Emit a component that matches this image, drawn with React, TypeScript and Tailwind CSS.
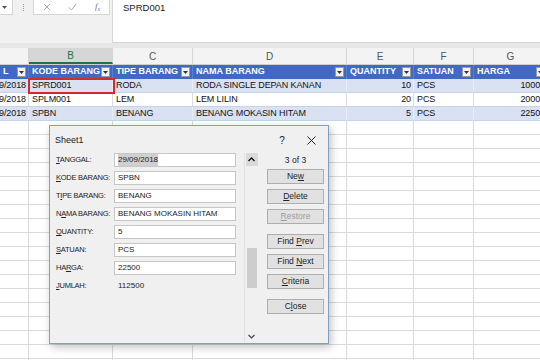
import React from "react";

const font = { fontFamily: '"Liberation Sans", Arial, sans-serif' };

const cols = [29, 84, 80, 154, 67, 60, 74];
const letters = ["", "B", "C", "D", "E", "F", "G"];
const heads = ["L", "KODE BARANG", "TIPE BARANG", "NAMA BARANG", "QUANTITY", "SATUAN", "HARGA"];
const rows = [
  ["9/2018", "SPRD001", "RODA", "RODA SINGLE DEPAN KANAN", "10", "PCS", "10000"],
  ["9/2018", "SPLM001", "LEM", "LEM LILIN", "20", "PCS", "20000"],
  ["9/2018", "SPBN", "BENANG", "BENANG MOKASIN HITAM", "5", "PCS", "22500"],
];
const rightAligned = [true, false, false, false, true, false, true];

function Arrow() {
  return (
    <span className="w-[9px] h-[10px] bg-[#f2f2f2] border border-[#9a9a9a] flex items-center justify-center shrink-0">
      <svg width="5" height="3" viewBox="0 0 5 3">
        <path d="M0 0h5L2.5 3z" fill="#333" />
      </svg>
    </span>
  );
}

// text with one underlined (accelerator) letter
function U({ text, at }: { text: string; at: number }) {
  return (
    <span className="whitespace-pre">
      {text.slice(0, at)}
      <span className="underline">{text[at]}</span>
      {text.slice(at + 1)}
    </span>
  );
}

const fields: [string, number, string, boolean][] = [
  ["TANGGAL:", 0, "29/09/2018", true],
  ["KODE BARANG:", 0, "SPBN", true],
  ["TIPE BARANG:", 1, "BENANG", true],
  ["NAMA BARANG:", 1, "BENANG MOKASIN HITAM", true],
  ["QUANTITY:", 0, "5", true],
  ["SATUAN:", 0, "PCS", true],
  ["HARGA:", 2, "22500", true],
  ["JUMLAH:", 0, "112500", false],
];

function Btn({ text, at, disabled, className = "" }: { text: string; at: number; disabled?: boolean; className?: string }) {
  return (
    <div
      className={`h-[15px] w-[57px] bg-[#e1e1e1] border border-[#adadad] flex items-center justify-center text-[8.5px] ${
        disabled ? "text-[#9d9d9d]" : "text-[#222]"
      } ${className}`}
    >
      <U text={text} at={at} />
    </div>
  );
}

function Dialog() {
  return (
    <div className="absolute left-[49px] top-[125px] w-[280px] h-[219px] bg-[#f0f0f0] border border-[#7f9fc8] shadow-[2px_3px_8px_rgba(0,0,0,0.25)] flex flex-col">
      <div className="h-[27px] flex items-center pl-[5px] pt-[2px] text-[9px] text-[#222] shrink-0">
        <span>Sheet1</span>
        <span className="ml-auto w-[12px] text-center text-[10px]">?</span>
        <span className="ml-[17px] mr-[11px] w-[12px] flex justify-center">
          <svg width="9" height="9" viewBox="0 0 9 9">
            <path d="M0.5 0.5l8 8M8.5 0.5l-8 8" stroke="#222" strokeWidth="1" />
          </svg>
        </span>
      </div>
      <div className="flex flex-1">
        <div className="w-[194px] pl-[6px] flex flex-col gap-[4px]">
          {fields.map(([label, at, value, input]) => (
            <div key={label} className="h-[14px] flex items-center text-[8px] text-[#222]">
              <span className="w-[58px] whitespace-nowrap text-[7.5px] tracking-[-0.25px]">
                <U text={label} at={at} />
              </span>
              {input ? (
                <div className="w-[122px] h-[14px] bg-white border border-[#c6c6c6] flex items-center pl-[3px]">
                  {label === "TANGGAL:" ? <span className="bg-[#d0d0d0]">{value}</span> : value}
                </div>
              ) : (
                <span className="pl-[4px]">{value}</span>
              )}
            </div>
          ))}
        </div>
        <div className="w-[14px] h-[190px] flex flex-col items-center border-l border-[#e2e2e2]">
          <div className="h-[13px] w-[12px] flex items-center justify-center bg-[#dadada]">
            <svg width="7" height="5" viewBox="0 0 7 5">
              <path d="M0.5 4L3.5 1L6.5 4" stroke="#111" strokeWidth="1.4" fill="none" />
            </svg>
          </div>
          <div className="h-[82px]" />
          <div className="h-[40px] w-[10px] bg-[#cdcdcd]" />
          <div className="flex-1" />
          <div className="h-[13px] w-[12px] flex items-center justify-center">
            <svg width="7" height="5" viewBox="0 0 7 5">
              <path d="M0.5 1L3.5 4L6.5 1" stroke="#444" strokeWidth="1.2" fill="none" />
            </svg>
          </div>
        </div>
        <div className="ml-[9px] w-[57px] flex flex-col">
          <div className="h-[14px] flex items-center justify-center text-[8.5px] text-[#222]">3 of 3</div>
          <Btn text="New" at={2} className="mt-[2px]" />
          <Btn text="Delete" at={0} className="mt-[5px]" />
          <Btn text="Restore" at={0} disabled className="mt-[5px]" />
          <Btn text="Find Prev" at={5} className="mt-[10px]" />
          <Btn text="Find Next" at={5} className="mt-[5px]" />
          <Btn text="Criteria" at={0} className="mt-[5px]" />
          <Btn text="Close" at={1} className="mt-[10px]" />
        </div>
      </div>
    </div>
  );
}

export default function App() {
  return (
    <div className="relative w-[540px] h-[360px] overflow-hidden bg-white" style={font}>
      {/* formula bar */}
      <div className="h-[43px] flex bg-[#f1f1f1]">
        <div className="w-[13px] h-[15px] bg-white border-r border-b border-[#d6d6d6] flex items-center justify-start pl-[2px]">
          <svg width="5" height="3" viewBox="0 0 5 3">
            <path d="M0 0h5L2.5 3z" fill="#555" />
          </svg>
        </div>
        <div className="w-[20px] h-[15px] flex flex-col items-center justify-center gap-[1px]">
          <span className="w-[1px] h-[1px] bg-[#999]" />
          <span className="w-[1px] h-[1px] bg-[#999]" />
          <span className="w-[1px] h-[1px] bg-[#999]" />
          <span className="w-[1px] h-[1px] bg-[#999]" />
        </div>
        <div className="w-[77px] h-[15px] bg-white border border-t-0 border-[#d6d6d6] flex items-center justify-around text-[#a0a0a0]">
          <svg width="8" height="8" viewBox="0 0 8 8">
            <path d="M1 1l6 6M7 1l-6 6" stroke="#a8a8a8" strokeWidth="1" />
          </svg>
          <svg width="9" height="8" viewBox="0 0 9 8">
            <path d="M1 4.5l2.5 2.5L8 1" stroke="#a8a8a8" strokeWidth="1" fill="none" />
          </svg>
          <span className="italic text-[9px] text-[#777]" style={{ fontFamily: '"Liberation Serif", serif' }}>
            f<sub className="text-[6px]">x</sub>
          </span>
        </div>
        <div className="ml-[2px] flex-1 bg-white border-l border-b border-[#d6d6d6] pl-[10px] pt-[1px] text-[9.5px] text-[#222]">
          SPRD001
        </div>
      </div>
      <div className="h-[5px] bg-[#e6e6e6]" />
      {/* column letters */}
      <div className="h-[17px] flex bg-[#f3f3f3] border-b border-[#cfcfcf]">
        {cols.map((w, i) => (
          <div
            key={i}
            style={{ width: w }}
            className={`shrink-0 flex items-center justify-center text-[10px] border-r border-[#d4d4d4] ${
              i === 1 ? "bg-[#d6d6d6] text-[#217346] border-b-2 border-b-[#217346]" : "text-[#555]"
            }`}
          >
            {letters[i]}
          </div>
        ))}
      </div>
      {/* table header */}
      <div className="h-[14px] flex bg-[#4169c4]">
        {cols.map((w, i) => (
          <div
            key={i}
            style={{ width: w }}
            className="shrink-0 flex items-center pl-[3px] pr-[2px] text-[9px] font-bold text-white border-r border-[#5a7fce] whitespace-nowrap overflow-hidden"
          >
            <span className="flex-1 overflow-hidden">{heads[i]}</span>
            <Arrow />
          </div>
        ))}
      </div>
      {rows.map((r, ri) => (
        <div
          key={ri}
          className={`h-[14px] flex border-b border-[#c9d3e6] ${ri === 1 ? "bg-white" : "bg-[#d9e1f2]"}`}
        >
          {cols.map((w, i) => (
            <div
              key={i}
              style={{ width: w }}
              className={`shrink-0 flex items-center text-[9px] tracking-[-0.1px] text-[#111] whitespace-nowrap overflow-hidden border-r ${
                ri === 1 ? "border-[#dcdcdc]" : "border-[#e8edf7]"
              } ${rightAligned[i] ? "justify-end pr-[2px]" : "pl-[3px]"}`}
            >
              {r[i]}
            </div>
          ))}
        </div>
      ))}
      {Array.from({ length: 18 }).map((_, ri) => (
        <div key={ri} className="h-[14px] flex border-b border-[#dadada]">
          {cols.map((w, i) => (
            <div key={i} style={{ width: w }} className="shrink-0 border-r border-[#dadada]" />
          ))}
        </div>
      ))}
      {/* active cell */}
      <div className="absolute left-[28px] top-[78px] w-[87px] h-[16px] border-2 border-[#d42a2a]" />
      <Dialog />
    </div>
  );
}
